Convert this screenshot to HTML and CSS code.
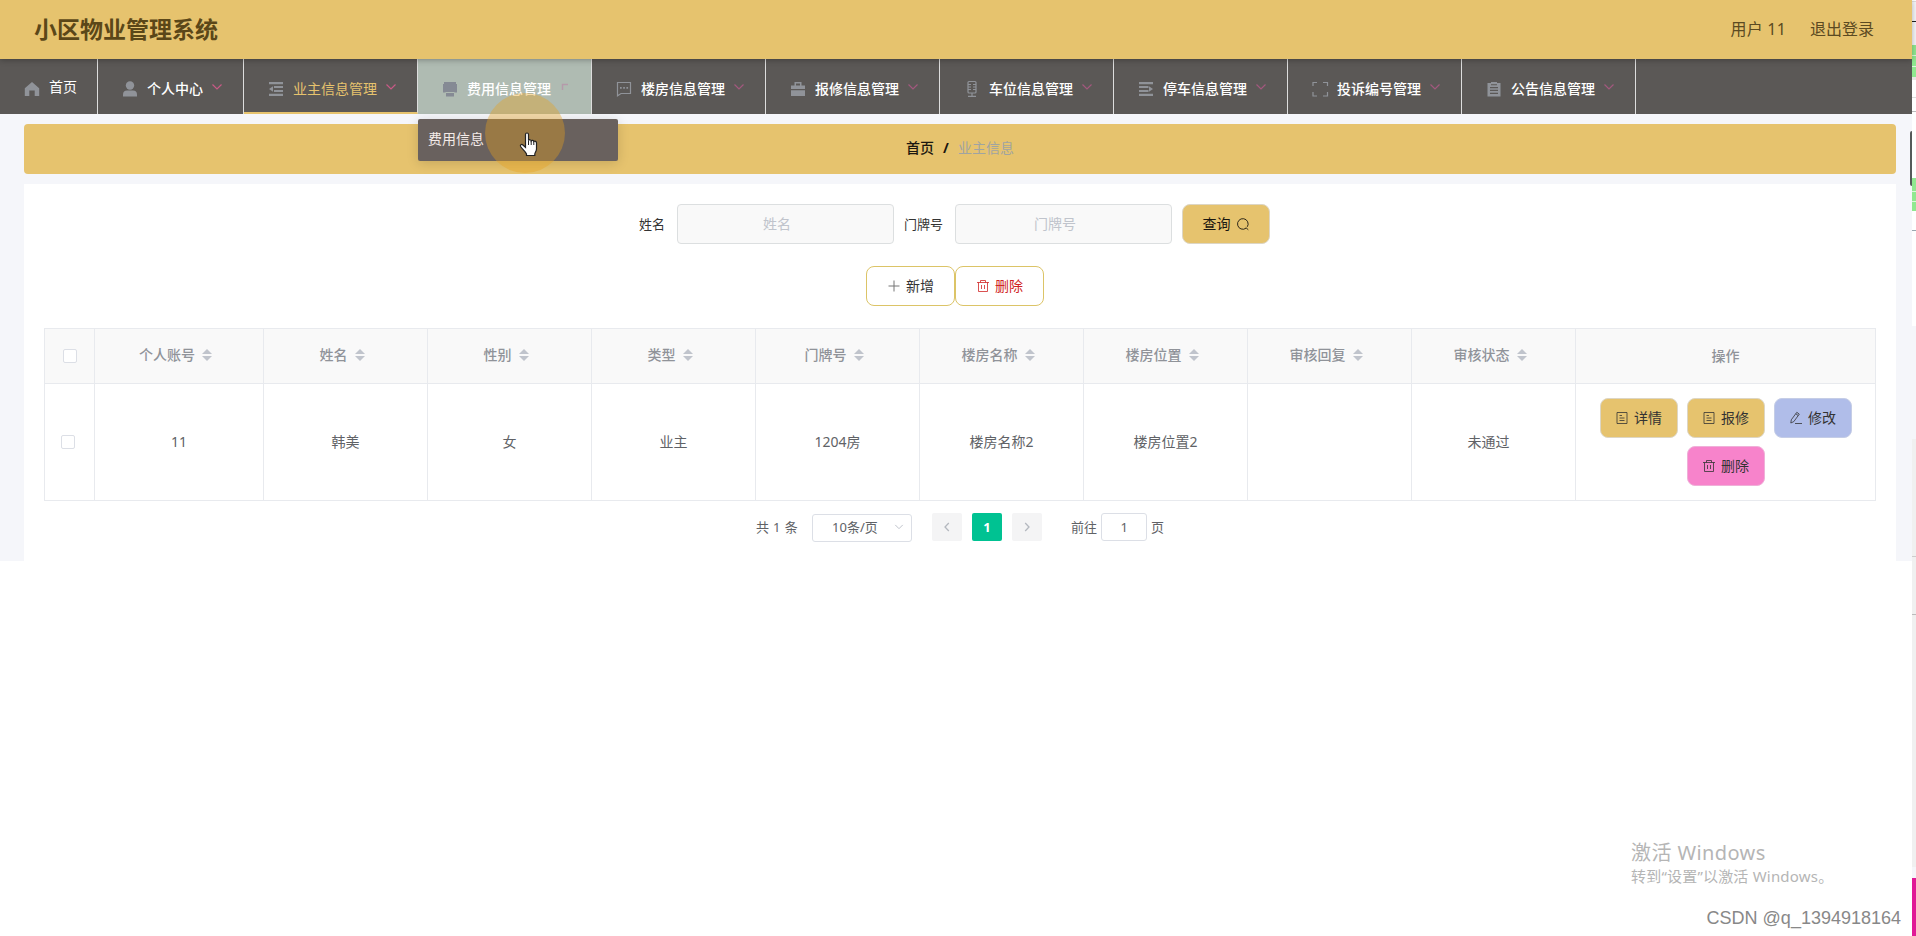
FILE: index.html
```html
<!DOCTYPE html>
<html lang="zh-CN">
<head>
  <meta charset="UTF-8">
  <meta name="viewport" content="width=device-width, initial-scale=1.0">
  <title>小区物业管理系统</title>
  <link rel="stylesheet" href="styles.css">
</head>
<body>

  <svg class="sprite">
    <symbol id="i-arrow" viewBox="0 0 12 12"><path d="M1.500 3.500 6 8l4.500-4.500" fill="none" stroke="currentColor" stroke-width="1.200"/></symbol>
    <symbol id="i-doc" viewBox="0 0 14 14"><path d="M2 1.500h10v11H2zM4.500 4.500h2.500M4.500 7h5M4.500 9.500h5" fill="none" stroke="currentColor" stroke-width=".8"/></symbol>
    <symbol id="i-del" viewBox="0 0 14 14"><path d="M1 3.500h12M4.500 3.500v-2h5v2M2.500 3.500v9h9v-9M5.500 6v4M8.500 6v4" fill="none" stroke="currentColor" stroke-width=".8"/></symbol>
    <symbol id="i-edit" viewBox="0 0 14 14"><path d="M2.300 8.800 7.800 1.300l2.500 1.800-5.500 7.500-3 1.400zM6.800 2.800l2.400 1.700M6 12.500h7" fill="none" stroke="currentColor" stroke-width=".8"/></symbol>
  </svg>

  <div class="page">
    <div class="header">
      <div class="title">小区物业管理系统</div>
      <div class="user">用户 11</div>
      <div class="logout">退出登录</div>
    </div>

    <ul class="nav">
      <li class="nav-item home">
        <svg class="nav-icon" viewBox="0 0 24 24"><path d="M12 5l7.200 6.200V19h-4.500v-5.500h-5.400V19H4.800v-7.800z"/></svg>
        <span>首页</span>
      </li>
      <li class="nav-item">
        <svg class="nav-icon" viewBox="0 0 24 24"><circle cx="12" cy="8.500" r="4.200"/><path d="M5 19.500v-2c0-2.500 1.500-4 4-4h6c2.500 0 4 1.500 4 4v2z"/></svg>
        <span>个人中心</span>
        <svg class="nav-arrow bright"><use href="#i-arrow"/></svg>
      </li>
      <li class="nav-item active">
        <svg class="nav-icon" viewBox="0 0 24 24"><path d="M5 5h14v2.200H5zM10 9h9v2h-9zM10 13h9v2h-9zM5 16.800h14V19H5zM5 12l4-2.700v5.400z"/></svg>
        <span>业主信息管理</span>
        <svg class="nav-arrow bright"><use href="#i-arrow"/></svg>
      </li>
      <li class="nav-item hover">
        <svg class="nav-icon" viewBox="0 0 24 24"><path d="M6 5h12v2h1v8.500h-2.500V15h-9v.5H5V7h1zM8 16h8v3.500H8z"/></svg>
        <span>费用信息管理</span>
        <svg class="nav-arrow" viewBox="0 0 12 12"><path d="M3.500 9V3.500H9" fill="none" stroke="currentColor" stroke-width="1.500"/></svg>
        <div class="submenu">费用信息</div>
      </li>
      <li class="nav-item">
        <svg class="nav-icon" viewBox="0 0 24 24"><path d="M5.500 5.500h13v11H9l-3.500 2.300z" fill="none" stroke="currentColor" stroke-width="1.200"/><path d="M8 10h1.700v1.700H8zM11.200 10h1.700v1.700h-1.700zM14.400 10h1.700v1.700h-1.700z"/></svg>
        <span>楼房信息管理</span>
        <svg class="nav-arrow"><use href="#i-arrow"/></svg>
      </li>
      <li class="nav-item">
        <svg class="nav-icon" viewBox="0 0 24 24"><path d="M5 12V8.500h3.500V5h7v3.500H19V12zM10 6.500v2h4v-2zM5 13.200h14V19H5z" fill-rule="evenodd"/></svg>
        <span>报修信息管理</span>
        <svg class="nav-arrow"><use href="#i-arrow"/></svg>
      </li>
      <li class="nav-item">
        <svg class="nav-icon" viewBox="0 0 24 24"><path d="M8 5.500q0-1 1-1h6q1 0 1 1v9.500q0 1-1 1H9q-1 0-1-1zM12 16v3.500M8 19.400h8M8 7.500h3M8 10h3M8 12.500h3M13 7.500h3M13 10h3M13 12.500h3" fill="none" stroke="currentColor" stroke-width="1.200"/></svg>
        <span>车位信息管理</span>
        <svg class="nav-arrow"><use href="#i-arrow"/></svg>
      </li>
      <li class="nav-item">
        <svg class="nav-icon" viewBox="0 0 24 24"><path d="M5 5h14v2.200H5zM5 9h9.500v2H5zM5 13h9.500v2H5zM5 16.800h14V19H5zM19 12l-4-2.700v5.400z"/></svg>
        <span>停车信息管理</span>
        <svg class="nav-arrow"><use href="#i-arrow"/></svg>
      </li>
      <li class="nav-item">
        <svg class="nav-icon" viewBox="0 0 24 24"><path d="M9 5.500H5V9M15 5.500h4.500V9M9 19H5v-4M15 19h4.500v-4" fill="none" stroke="currentColor" stroke-width="1.200"/></svg>
        <span>投诉编号管理</span>
        <svg class="nav-arrow"><use href="#i-arrow"/></svg>
      </li>
      <li class="nav-item">
        <svg class="nav-icon" viewBox="0 0 24 24"><path d="M5.500 6H9V5h6v1h3.500v13.500h-13zM8 10v1.200h8V10zM8 12.800V14h8v-1.200zM8 15.800V17h8v-1.200zM9 7.300v1h6v-1z" fill-rule="evenodd"/></svg>
        <span>公告信息管理</span>
        <svg class="nav-arrow"><use href="#i-arrow"/></svg>
      </li>
    </ul>

    <div class="main">
      <div class="breadcrumb"><b>首页</b><b class="sep">/</b><span>业主信息</span></div>

      <div class="content">
        <form class="search">
          <label for="xingming">姓名</label>
          <input type="text" id="xingming" placeholder="姓名">
          <label for="menpaihao">门牌号</label>
          <input type="text" id="menpaihao" placeholder="门牌号">
          <button type="button" class="btn query">查询
            <svg class="icon" viewBox="0 0 14 14"><path d="M10 11.200a5.300 5.300 0 1 1 1.300-1.400M9.800 10.500l2.500 2.300" fill="none" stroke="currentColor" stroke-width=".9"/></svg>
          </button>
        </form>

        <div class="tools">
          <button type="button" class="btn line">
            <svg class="icon plus" viewBox="0 0 14 14"><path d="M7 1.500v11M1.500 7h11" fill="none" stroke="currentColor"/></svg>新增
          </button>
          <button type="button" class="btn line red"><svg class="icon"><use href="#i-del"/></svg>删除</button>
        </div>

        <table class="table">
          <colgroup>
            <col class="c-check"><col class="c-account"><col><col><col><col><col><col><col><col><col class="c-action">
          </colgroup>
          <thead>
            <tr>
              <th><i class="checkbox"></i></th>
              <th>个人账号<i class="sort"></i></th>
              <th>姓名<i class="sort"></i></th>
              <th>性别<i class="sort"></i></th>
              <th>类型<i class="sort"></i></th>
              <th>门牌号<i class="sort"></i></th>
              <th>楼房名称<i class="sort"></i></th>
              <th>楼房位置<i class="sort"></i></th>
              <th>审核回复<i class="sort"></i></th>
              <th>审核状态<i class="sort"></i></th>
              <th class="last">操作</th>
            </tr>
          </thead>
          <tbody>
            <tr>
              <td class="check"><i class="checkbox"></i></td>
              <td>11</td>
              <td>韩美</td>
              <td>女</td>
              <td>业主</td>
              <td>1204房</td>
              <td>楼房名称2</td>
              <td>楼房位置2</td>
              <td></td>
              <td class="status">未通过</td>
              <td>
                <div class="actions">
                  <button type="button" class="btn small"><svg class="icon"><use href="#i-doc"/></svg>详情</button>
                  <button type="button" class="btn small"><svg class="icon"><use href="#i-doc"/></svg>报修</button>
                  <button type="button" class="btn small blue"><svg class="icon"><use href="#i-edit"/></svg>修改</button>
                  <button type="button" class="btn small pink"><svg class="icon"><use href="#i-del"/></svg>删除</button>
                </div>
              </td>
            </tr>
          </tbody>
        </table>

        <div class="pagination">
          <span class="total">共 1 条</span>
          <div class="size">10条/页<svg class="size-arrow"><use href="#i-arrow"/></svg></div>
          <div class="pager"><svg viewBox="0 0 12 12"><path d="M7.800 2 4 6l3.800 4" fill="none" stroke="currentColor" stroke-width="1.300"/></svg></div>
          <div class="pager current">1</div>
          <div class="pager"><svg viewBox="0 0 12 12"><path d="M4.200 2 8 6l-3.800 4" fill="none" stroke="currentColor" stroke-width="1.300"/></svg></div>
          <span class="goto">前往</span>
          <div class="jump">1</div>
          <span>页</span>
        </div>
      </div>
    </div>
  </div>

  <!-- mouse pointer -->
  <div class="halo"></div>
  <svg class="pointer" viewBox="0 0 20 26"><path d="M6.500 2.500c0-2 3-2 3 0v6c.5-1.200 2.500-1 2.700.4.700-1 2.500-.7 2.600.7.900-.8 2.700-.3 2.700 1.300v6c0 2-1.500 3.500-1.700 5.100v1.500H7.500V22C6 19 3.500 17.500 1.600 14.500c-.8-1.600 1-2.700 2.300-1.500l2.600 2.300z" fill="#fff" stroke="#222" stroke-width="1.200"/><path d="M9.500 8.500v4.500M12.200 9v4M14.800 9.700V13" stroke="#222"/></svg>

  <!-- edge of the window behind -->
  <div class="thumb"></div>
  <div class="edge"></div>

  <div class="activate">
    <div class="activate-title">激活 Windows</div>
    <div class="activate-text">转到“设置”以激活 Windows。</div>
  </div>
  <div class="watermark">CSDN @q_1394918164</div>

</body>
</html>
```
FILE: styles.css
```css
* {
  box-sizing: border-box;
}

body {
  margin: 0;
  height: 936px;
  overflow: hidden;
  position: relative;
  background: #fff;
  color: #606266;
  font-family: "Noto Sans", "Noto Sans CJK SC", sans-serif;
  font-size: 14px;
  line-height: 20px;
}

.sprite {
  display: none;
}

.page {
  width: 1912px;
}

.header {
  position: relative;
  z-index: 1;
  display: flex;
  align-items: center;
  height: 59px;
  padding: 0 38px 1px 34px;
  background: #e6c36e;
  box-shadow: 0 1px 6px rgba(0, 0, 0, .3);
  color: #5b4a22;
  font-size: 16px;
}

.title {
  flex: 1;
  color: #5b4718;
  font-size: 23px;
  font-weight: 700;
}

.user {
  letter-spacing: .2px;
}

.logout {
  margin-left: 24px;
}

.nav {
  display: flex;
  height: 55px;
  margin: 0;
  padding: 0;
  background: #5b5856;
  list-style: none;
}

.nav-item {
  position: relative;
  display: flex;
  align-items: center;
  padding: 4px 20px 0;
  border-right: 1px solid #ddd;
  color: #fff;
  font-weight: 500;
}

.nav-item.home {
  padding-top: 1px;
  font-weight: 400;
}

.nav-icon {
  width: 24px;
  height: 24px;
  margin-right: 5px;
  fill: #909399;
  color: #909399;
}

.home .nav-icon {
  margin-top: 3px;
}

.nav-arrow {
  width: 12px;
  height: 12px;
  margin: -4px 0 0 8px;
  color: #a3587e;
}

.nav-arrow.bright {
  color: #c85a86;
}

.nav-item.active {
  border-bottom: 2px solid #e6c36e;
  padding-top: 6px;
  color: #e6c36e;
  font-weight: 400;
}

.nav-item.hover {
  background: #afbbb2;
}

.hover .nav-icon {
  fill: #858a94;
}

.hover .nav-arrow {
  color: #b59aaa;
}

.submenu {
  position: absolute;
  z-index: 2;
  top: 60px;
  left: 0;
  width: 200px;
  height: 42px;
  padding-left: 10px;
  border-radius: 2px;
  background: #69615e;
  box-shadow: 0 2px 12px rgba(0, 0, 0, .15);
  color: #f4ebe8;
  font-weight: 400;
  line-height: 40px;
}

.main {
  height: 447px;
  padding: 10px 16px 0 24px;
  background: #f5f6fa;
}

.breadcrumb {
  display: flex;
  align-items: center;
  justify-content: center;
  height: 50px;
  margin-bottom: 10px;
  padding-bottom: 2px;
  border-radius: 4px;
  background: #e6c36e;
  color: #9fa4a2;
}

.breadcrumb b {
  color: #1b1710;
  font-weight: 500;
}

.breadcrumb .sep {
  margin: 0 9px;
  font-weight: 700;
}

.content {
  height: 377px;
  padding: 20px 20px 0;
  background: #fff;
}

.search {
  display: flex;
  justify-content: center;
  align-items: center;
  margin-right: 11px;
  color: #333;
  font-size: 13px;
}

.search input {
  width: 217px;
  height: 40px;
  margin: 0 10px 0 12px;
  padding: 0 17px 2px 0;
  border: 1px solid #dcdfe0;
  border-radius: 4px;
  background: #f9f9f9;
  font: inherit;
  font-size: 14px;
  text-align: center;
}

.search input::placeholder {
  color: #c0c4cc;
}

.btn {
  display: flex;
  align-items: center;
  justify-content: center;
  height: 40px;
  padding: 0;
  border: 1px solid #ddd6c4;
  border-radius: 8px;
  background: #e6c36e;
  color: #333;
  font: inherit;
  font-size: 14px;
}

.icon {
  width: 14px;
  height: 14px;
  margin-right: 5px;
}

.query {
  width: 88px;
  color: #1b1710;
}

.query .icon {
  margin: 0 0 0 5px;
}

.tools {
  display: flex;
  justify-content: center;
  margin: 22px 10px 22px 0;
}

.line {
  width: 89px;
  border-color: #dcc467;
  background: #fff;
}

.plus {
  color: #777;
}

.red {
  color: #d02424;
}

.table {
  width: 1832px;
  border-collapse: separate;
  border-spacing: 0;
  border-top: 1px solid #e8eaee;
  border-left: 1px solid #e8eaee;
  table-layout: fixed;
}

.c-check {
  width: 50px;
}

.c-account {
  width: 169px;
}

.c-action {
  width: 300px;
}

.table th,
.table td {
  padding: 0;
  border-right: 1px solid #e8eaee;
  border-bottom: 1px solid #e8eaee;
  text-align: center;
}

.table th {
  height: 55px;
  padding-bottom: 2px;
  background: #f9f9f9;
  color: #909399;
  font-weight: 500;
}

.table th.last {
  padding-bottom: 0;
}

.table td {
  height: 117px;
}

.table td.check {
  padding: 0 4px 2px 0;
}

.table td.status {
  padding-right: 10px;
}

.checkbox {
  display: inline-block;
  width: 14px;
  height: 14px;
  border: 1px solid #dcdfe6;
  border-radius: 2px;
  background: #fff;
  vertical-align: middle;
}

.sort {
  position: relative;
  display: inline-block;
  width: 24px;
  height: 14px;
  vertical-align: -2px;
}

.sort::before,
.sort::after {
  content: "";
  position: absolute;
  left: 7px;
  border: 5px solid transparent;
}

.sort::before {
  top: -4px;
  border-bottom-color: #c0c4cc;
}

.sort::after {
  top: 8px;
  border-top-color: #c0c4cc;
}

.actions {
  display: flex;
  flex-wrap: wrap;
  justify-content: center;
  gap: 8px 9px;
}

.small {
  width: 78px;
}

.blue {
  border-color: #c5cde6;
  background: #b0bde9;
}

.pink {
  border-color: #efb0d8;
  background: #f783cb;
}

.pagination {
  display: flex;
  align-items: center;
  justify-content: center;
  height: 28px;
  margin-top: 12px;
  font-size: 13px;
}

.total {
  letter-spacing: .4px;
}

.size {
  display: flex;
  align-items: center;
  width: 100px;
  height: 28px;
  margin: 2px 15px 0 14px;
  padding: 0 7px 2px 19px;
  border: 1px solid #dcdfe6;
  border-radius: 3px;
}

.size-arrow {
  width: 10px;
  height: 10px;
  margin-left: auto;
  color: #c0c4cc;
}

.pager {
  display: flex;
  align-items: center;
  justify-content: center;
  width: 30px;
  height: 28px;
  margin: 0 5px;
  border-radius: 2px;
  background: #f4f4f5;
  color: #b4b8bf;
}

.pager svg {
  width: 12px;
  height: 12px;
}

.current {
  background: #00c292;
  color: #fff;
  font-weight: 700;
}

.goto {
  margin-left: 24px;
}

.jump {
  width: 46px;
  height: 28px;
  margin: 0 4px;
  border: 1px solid #dcdfe6;
  border-radius: 3px;
  line-height: 26px;
  text-align: center;
}

.halo {
  position: absolute;
  z-index: 3;
  top: 93px;
  left: 485px;
  width: 80px;
  height: 80px;
  border-radius: 50%;
  background: rgba(232, 160, 30, .38);
}

.pointer {
  position: absolute;
  z-index: 4;
  top: 132px;
  left: 519px;
  width: 20px;
  height: 26px;
}

.thumb {
  position: absolute;
  top: 131px;
  left: 1910px;
  width: 2px;
  height: 55px;
  border-radius: 2px 0 0 2px;
  background: #555a5a;
}

.edge {
  position: absolute;
  top: 0;
  left: 1912px;
  width: 4px;
  height: 936px;
  background: linear-gradient(#fff 1px, #ddd 1px 2px, #f5f6fa 2px 21px, #222 21px 22px, #f5f6fa 22px 45px, #90e890 45px 55px, #dff7df 55px 56px, #90e890 56px 66px, #dff7df 66px 67px, #90e890 67px 77px, #e6e6e6 77px 80px, #fff 80px 97px, #ddd 97px 98px, #fff 98px 111px, #bbb 111px 112px, #fff 112px 178px, #90e890 178px 191px, #dff7df 191px 192px, #90e890 192px 201px, #dff7df 201px 202px, #90e890 202px 211px, #fff 211px 230px, #9aa8b0 230px 231px, #fff 231px 326px, #f5f6fa 326px 439px, #f0f0f0 439px 556px, #ccc 556px 557px, #f0f0f0 557px 614px, #bbb 614px 615px, #f0f0f0 615px 867px, #f5f6fa 867px 878px, #e01896 878px);
}

.activate {
  position: absolute;
  top: 840px;
  left: 1631px;
  color: #b5b5b5;
}

.activate-title {
  font-size: 20px;
  letter-spacing: .4px;
  line-height: 26px;
}

.activate-text {
  font-size: 15px;
  letter-spacing: .2px;
  line-height: 21px;
}

.watermark {
  position: absolute;
  top: 908px;
  right: 15px;
  color: #888;
  font-family: "Liberation Sans", sans-serif;
  font-size: 18px;
}
```
